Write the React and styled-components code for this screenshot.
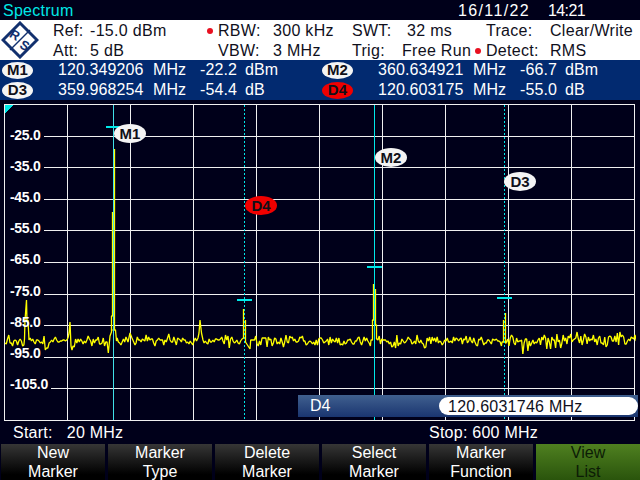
import React from "react";
import styled, { createGlobalStyle } from "styled-components";

const Global = createGlobalStyle`
  html, body { margin: 0; padding: 0; background: #00001a; overflow: hidden; }
  * { box-sizing: border-box; }
`;

const Screen = styled.div`
  width: 640px; height: 480px; background: #00001a; color: #fff;
  font: 16px/18px "Liberation Sans", Arial, sans-serif;
  display: flex; flex-direction: column; overflow: hidden;
`;
const TitleBar = styled.div`
  height: 20px; flex: none; display: flex; align-items: center; justify-content: space-between;
  padding: 1px 55px 0 3px;
`;
const Title = styled.span`color: #00e8e8; letter-spacing: .25px;`;
const Clock = styled.div`display: flex; gap: 18px;`;
const DateText = styled.span`letter-spacing: 1.35px;`;
const TimeText = styled.span`letter-spacing: -.6px;`;

const Info = styled.div`
  height: 40px; flex: none; background: #fff; color: #10101c; position: relative; padding-top: 1px;
  display: grid; grid-template-columns: 53px 37px 120px 8px 55px 79px 50px 76px 8px 64px 1fr;
  grid-template-rows: 20px 20px; align-items: center;
  letter-spacing: .3px;
`;
const LogoCell = styled.div`grid-row: 1 / span 2; display: flex; padding-left: 1px; margin-top: -2px; align-items: center;`;
const Cell = styled.span`
  grid-column: ${p => p.$col}; grid-row: ${p => p.$row}; white-space: nowrap;
  padding-left: ${p => p.$pad || 0}px;
`;
const Dot = styled.i`
  grid-column: ${p => p.$col}; grid-row: ${p => p.$row}; margin-left: -3px;
  width: 6px; height: 6px; border-radius: 50%; background: #e81020; display: block;
`;

const Markers = styled.div`
  height: 40px; flex: none; background: #022a70;
  display: grid; grid-template-columns: repeat(2, 320px); grid-template-rows: 20px 20px;
`;
const MarkerRow = styled.div`
  display: grid; grid-template-columns: 2px 31px 25px 95px 47px 45px 1fr; align-items: center;
  letter-spacing: .1px; white-space: nowrap;
`;
const Badge = styled.b`
  grid-column: 2; height: 17px; border-radius: 50%; display: flex; align-items: center; justify-content: center;
  font-size: 15px; font-weight: 700; color: #101018;
  background: ${p => (p.$red ? "#f00000" : "#f4f4f4")};
`;
const MarkerVal = styled.span`grid-column: ${p => p.$col};`;

const Plot = styled.div`
  position: relative; margin: 4px 0 0 4px; width: 632px; height: 317px; flex: none;
`;
const PlotSvg = styled.svg`display: block; position: absolute; inset: 0;`;
const AxisLabel = styled.span`
  position: absolute; left: 6px; font-size: 14px; font-weight: 700; line-height: 14px; color: #fff; letter-spacing: -.3px;
`;
const Flag = styled.b`
  position: absolute; width: 32px; height: 19px; border-radius: 50%; display: flex; align-items: center; justify-content: center;
  font-size: 15px; font-weight: 700; color: #101018;
  background: ${p => (p.$red ? "#f00000" : "#f4f4f4")};
`;
const EntryBar = styled.div`
  position: absolute; left: 294px; right: -2px; top: 291px; height: 22px; padding-left: 12px;
  display: flex; align-items: center; justify-content: space-between;
  background: linear-gradient(#40608f, #1a3570);
`;
const EntryField = styled.div`
  width: 199px; height: 18px; border-radius: 9px; background: #fff; color: #10101c;
  padding: 1px 0 0 9px; line-height: 18px; letter-spacing: .25px;
`;

const Span = styled.div`
  height: 23px; flex: none; display: flex; align-items: center; padding-left: 13px; letter-spacing: .25px;
`;
const SpanStart = styled.div`width: 416px; display: flex; gap: 14px;`;

const Keys = styled.div`
  flex: 1; min-height: 0; display: grid; grid-template-columns: repeat(6, 1fr); gap: 0 3px; padding-left: 1px;
`;
const Key = styled.div`
  display: flex; flex-direction: column; justify-content: center; align-items: center; overflow: visible;
  line-height: 19px; min-height: 0;
  background: ${p => (p.$active ? "linear-gradient(#4f8020, #2a540c)" : "linear-gradient(#363636, #000 85%)")};
  color: ${p => (p.$active ? "#0c1c06" : "#fff")};
`;

function rng(seed) {
  let s = seed;
  return () => {
    s = (s * 1664525 + 1013904223) >>> 0;
    return s / 4294967296;
  };
}

// [x, y, startNewSubpath]
const peaks = [
  [[24.5, 339], [25, 320], [26.5, 300], [27, 322], [28, 320], [29, 340]],
  [[68, 338], [69, 333], [70, 322], [71, 346], [72, 350]],
  [[110, 336], [111.5, 332], [111.5, 316], [112.5, 316], [112.5, 212], [112.5, 330, true], [114.5, 330], [114.5, 149], [114.5, 330], [115.5, 330], [116.5, 341]],
  [[128, 342], [130, 333], [132, 338], [135, 345]],
  [[198, 338], [199, 333], [200, 320], [201.5, 333], [203, 340]],
  [[242, 339], [243.5, 338], [243.5, 309], [243.5, 338, true], [245.5, 338], [245.5, 320], [245.5, 342], [250, 349]],
  [[371, 340], [372.5, 340], [372.5, 320], [373.5, 320], [373.5, 284], [373.5, 320, true], [375.5, 320], [375.5, 289], [375.5, 325], [376.5, 325], [376.5, 339], [377, 339]],
  [[502, 342], [503.5, 342], [503.5, 320], [503.5, 342, true], [505.5, 342], [505.5, 313], [505.5, 343], [506, 343]],
];

function buildTrace() {
  const r = rng(20221116);
  const runs = [];
  for (let i = 0; i <= 501; i++) {
    const x = 5 + i * 1.26;
    if (peaks.some(p => x >= p[0][0] - 0.5 && x <= p[p.length - 1][0] + 0.5)) continue;
    const wide = x < 50 || x > 500 ? 1.35 : 1;
    let y = 341 + (r() + r() + r() - 1.5) * 5.5 * wide;
    if (r() < 0.05) y += 4;
    if (x > 540) y -= 1.5;
    runs.push([x, Math.round(y)]);
  }
  peaks.forEach(p => runs.push(p));
  runs.sort((a, b) => (Array.isArray(a[0]) ? a[0][0] : a[0]) - (Array.isArray(b[0]) ? b[0][0] : b[0]));
  const pts = runs.flatMap(p => (Array.isArray(p[0]) ? p : [p]));
  return pts.map((p, i) => `${i === 0 || p[2] ? "M" : "L"}${p[0]} ${p[1]}`).join("");
}
const tracePath = buildTrace();

const vLines = [67, 130, 193, 256, 319, 382, 445, 508, 571];
const hLines = [136, 167, 199, 230, 262, 294, 325, 357, 388];
const labels = ["-25.0", "-35.0", "-45.0", "-55.0", "-65.0", "-75.0", "-85.0", "-95.0", "-105.0"];
const flags = [
  { t: "M1", x: 114, y: 124 },
  { t: "D4", x: 245, y: 196, red: true },
  { t: "M2", x: 375, y: 148 },
  { t: "D3", x: 504, y: 172 },
];
const bars = [[106, 127], [237, 300], [367, 267], [497, 298]];

const Logo = () => (
  <svg width="38" height="38" viewBox="0 0 38 38">
    <path d="M19 2 36 19 19 36 2 19Z" fill="#fff" stroke="#12306e" strokeWidth="3" />
    <path d="M9 29 29 9" stroke="#12306e" strokeWidth="1.4" />
    <text x="14" y="18.5" fontSize="13" fontWeight="700" fontFamily="Liberation Sans" textAnchor="middle" fill="#12306e" transform="rotate(30 14 14)">R</text>
    <text x="24" y="29" fontSize="13" fontWeight="700" fontFamily="Liberation Sans" textAnchor="middle" fill="#12306e" transform="rotate(30 24 24.5)">S</text>
  </svg>
);

const MarkerLine = ({ id, red, freq, level, unit }) => (
  <MarkerRow>
    <Badge $red={red}>{id}</Badge>
    <MarkerVal $col={4}>{freq}</MarkerVal>
    <MarkerVal $col={5}>MHz</MarkerVal>
    <MarkerVal $col={6}>{level}</MarkerVal>
    <MarkerVal $col={7}>{unit}</MarkerVal>
  </MarkerRow>
);

export default function App() {
  return (
    <Screen>
      <Global />
      <TitleBar>
        <Title>Spectrum</Title>
        <Clock><DateText>16/11/22</DateText><TimeText>14:21</TimeText></Clock>
      </TitleBar>
      <Info>
        <LogoCell><Logo /></LogoCell>
        <Cell $col={2} $row={1}>Ref:</Cell>
        <Cell $col={3} $row={1}>-15.0 dBm</Cell>
        <Dot $col={4} $row={1} />
        <Cell $col={5} $row={1}>RBW:</Cell>
        <Cell $col={6} $row={1}>300 kHz</Cell>
        <Cell $col={7} $row={1}>SWT:</Cell>
        <Cell $col={8} $row={1} $pad={5}>32 ms</Cell>
        <Cell $col={10} $row={1}>Trace:</Cell>
        <Cell $col={11} $row={1}>Clear/Write</Cell>
        <Cell $col={2} $row={2}>Att:</Cell>
        <Cell $col={3} $row={2}>5 dB</Cell>
        <Cell $col={5} $row={2}>VBW:</Cell>
        <Cell $col={6} $row={2}>3 MHz</Cell>
        <Cell $col={7} $row={2}>Trig:</Cell>
        <Cell $col={8} $row={2}>Free Run</Cell>
        <Dot $col={9} $row={2} />
        <Cell $col={10} $row={2}>Detect:</Cell>
        <Cell $col={11} $row={2}>RMS</Cell>
      </Info>
      <Markers>
        <MarkerLine id="M1" freq="120.349206" level="-22.2" unit="dBm" />
        <MarkerLine id="M2" freq="360.634921" level="-66.7" unit="dBm" />
        <MarkerLine id="D3" freq="359.968254" level="-54.4" unit="dB" />
        <MarkerLine id="D4" red freq="120.603175" level="-55.0" unit="dB" />
      </Markers>
      <Plot>
        <PlotSvg width="632" height="317" viewBox="4 104 632 317">
          <g stroke="#f0f0f0" strokeWidth="1" shapeRendering="crispEdges">
            <rect x="4.5" y="104.5" width="630" height="316" fill="none" />
            {vLines.map(x => <line key={x} x1={x + 0.5} x2={x + 0.5} y1="104" y2="420" />)}
            {hLines.map((y, i) => <line key={y} x1={i === 8 ? 51 : 44} x2="634" y1={y + 0.5} y2={y + 0.5} />)}
          </g>
          <path d={tracePath} fill="none" stroke="#ffff00" strokeWidth="1.3" strokeLinejoin="bevel" />
          <g shapeRendering="crispEdges">
            <path d="M5 105H13L5 113Z" fill="#00e8e8" />
            <line x1="113.5" x2="113.5" y1="105" y2="420" stroke="#40e0e8" />
            <line x1="374.5" x2="374.5" y1="105" y2="420" stroke="#00e8e8" />
            <line x1="244.5" x2="244.5" y1="105" y2="420" stroke="#00e8e8" strokeDasharray="2 2" />
            <line x1="504.5" x2="504.5" y1="105" y2="420" stroke="#00e8e8" strokeDasharray="2 2" />
            {bars.map(([x, y]) => <rect key={x} x={x} y={y - 1} width="15" height="2" fill="#00e8e8" />)}
          </g>
        </PlotSvg>
        {labels.map((t, i) => (
          <AxisLabel key={t} style={{ top: 24 + i * 31.1 }}>{t}</AxisLabel>
        ))}
        {flags.map(f => (
          <Flag key={f.t} $red={f.red} style={{ left: f.x - 4, top: f.y - 104 }}>{f.t}</Flag>
        ))}
        <EntryBar>
          <span>D4</span>
          <EntryField>120.6031746 MHz</EntryField>
        </EntryBar>
      </Plot>
      <Span>
        <SpanStart><span>Start:</span><span>20 MHz</span></SpanStart>
        <span>Stop: 600 MHz</span>
      </Span>
      <Keys>
        <Key><span>New</span><span>Marker</span></Key>
        <Key><span>Marker</span><span>Type</span></Key>
        <Key><span>Delete</span><span>Marker</span></Key>
        <Key><span>Select</span><span>Marker</span></Key>
        <Key><span>Marker</span><span>Function</span></Key>
        <Key $active><span>View</span><span>List</span></Key>
      </Keys>
    </Screen>
  );
}
